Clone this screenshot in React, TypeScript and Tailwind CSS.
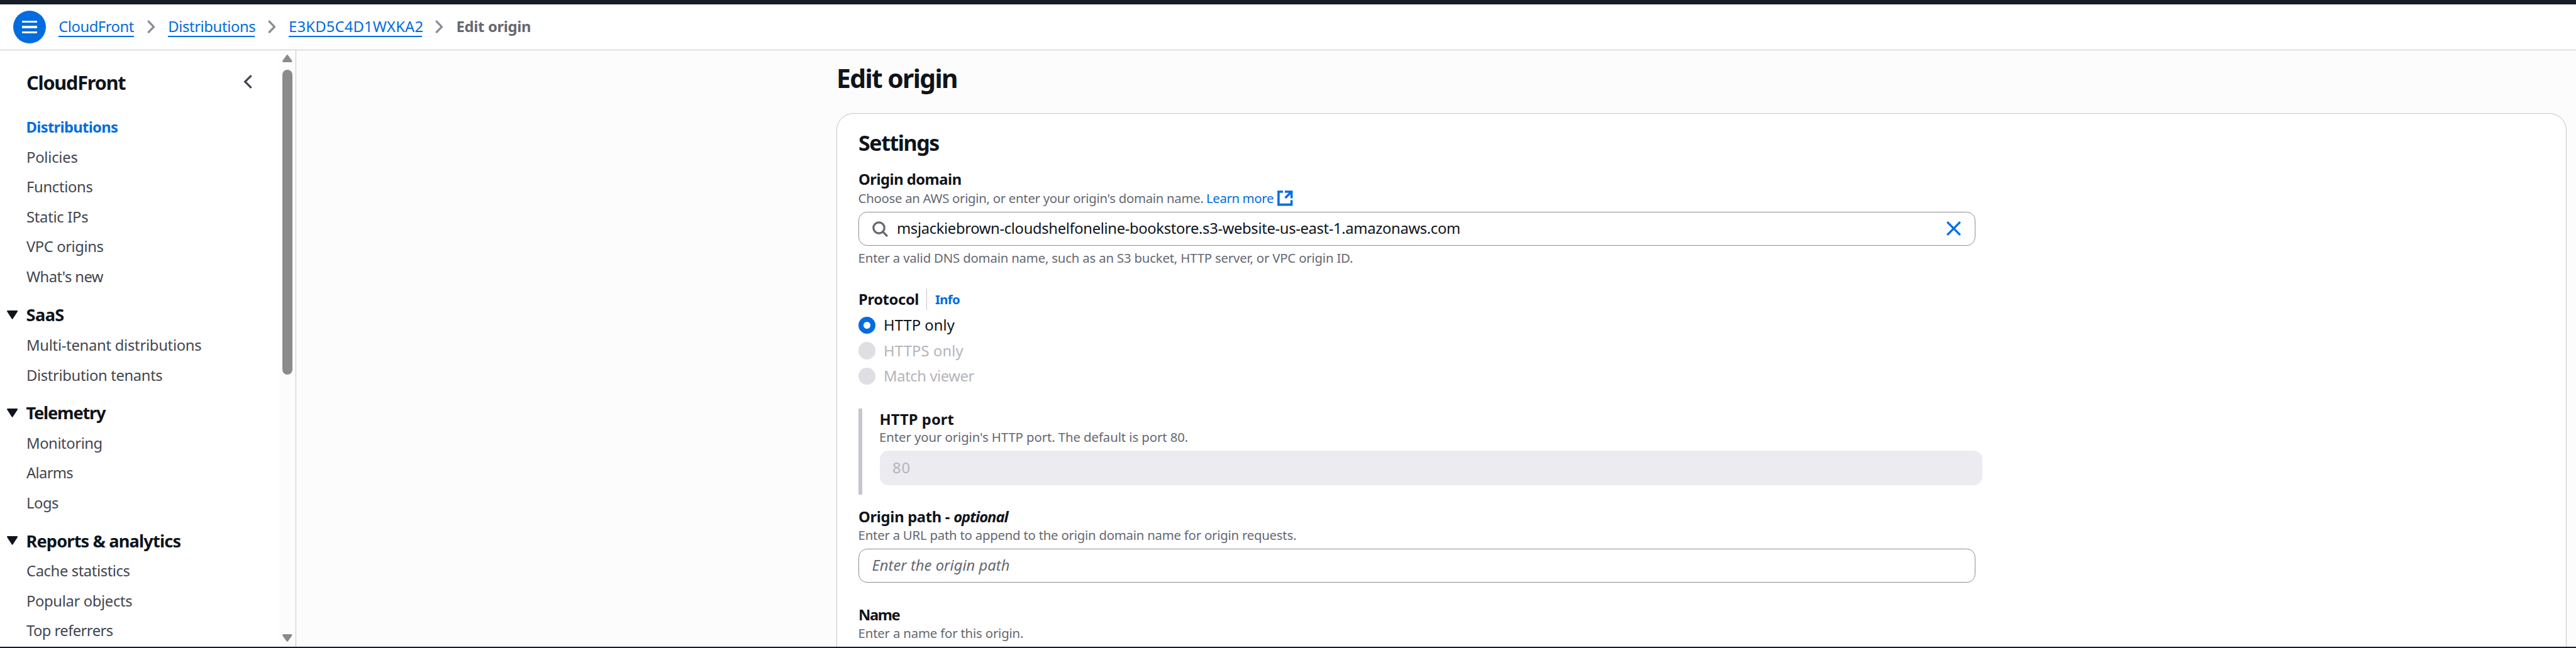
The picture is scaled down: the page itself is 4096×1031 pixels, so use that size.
import React from "react";

type Item = { label: string; tracking: string };
type Section = { title: string; tracking: string; spacing: string; items: Item[] };

const topLinks: Item[] = [
  { label: "Policies", tracking: "tracking-[-0.23px]" },
  { label: "Functions", tracking: "tracking-[-0.32px]" },
  { label: "Static IPs", tracking: "tracking-[-0.29px]" },
  { label: "VPC origins", tracking: "tracking-[-0.43px]" },
  { label: "What's new", tracking: "tracking-[-0.6px]" },
];

const sections: Section[] = [
  {
    title: "SaaS",
    tracking: "tracking-[-0.56px]",
    spacing: "pt-[13px] mb-[1.2px]",
    items: [
      { label: "Multi-tenant distributions", tracking: "tracking-[-0.28px]" },
      { label: "Distribution tenants", tracking: "tracking-[-0.36px]" },
    ],
  },
  {
    title: "Telemetry",
    tracking: "tracking-[-1.19px]",
    spacing: "pt-[12px] mb-[0.7px]",
    items: [
      { label: "Monitoring", tracking: "tracking-[-0.43px]" },
      { label: "Alarms", tracking: "tracking-[-0.68px]" },
      { label: "Logs", tracking: "tracking-[-0.47px]" },
    ],
  },
  {
    title: "Reports & analytics",
    tracking: "tracking-[-0.85px]",
    spacing: "pt-[12.4px] mb-[1.2px]",
    items: [
      { label: "Cache statistics", tracking: "tracking-[-0.41px]" },
      { label: "Popular objects", tracking: "tracking-[-0.36px]" },
      { label: "Top referrers", tracking: "tracking-[-0.57px]" },
    ],
  },
];

function Separator() {
  return (
    <svg className="mx-[20.8px] h-[21.4px] w-[12.6px] shrink-0" viewBox="0 0 12.6 21.4" fill="none" stroke="#8c8c94" strokeWidth="3.3">
      <path d="M1.3 1.2 L10.4 10.7 L1.3 20.2" />
    </svg>
  );
}

function Crumb({ label, className }: { label: string; className: string }) {
  return (
    <a className={`shrink-0 whitespace-nowrap border-b-2 border-[#006ce0] leading-[30px] text-[#006ce0] ${className}`}>{label}</a>
  );
}

function Header() {
  return (
    <header className="flex h-[73px] shrink-0 items-center border-b border-[#c6c6cd] bg-white pl-[21px] text-[23.8px]">
      <button className="mr-[20.4px] flex size-[51.8px] shrink-0 flex-col items-center justify-center gap-[5.3px] rounded-full bg-[#006ce0]">
        <span className="h-[3.2px] w-[24.6px] bg-white" />
        <span className="h-[3.2px] w-[24.6px] bg-white" />
        <span className="h-[3.2px] w-[24.6px] bg-white" />
      </button>
      <Crumb label="CloudFront" className="w-[119.8px] tracking-[-0.46px]" />
      <Separator />
      <Crumb label="Distributions" className="w-[137.7px] tracking-[-0.38px]" />
      <Separator />
      <Crumb label="E3KD5C4D1WXKA2" className="w-[212.3px] tracking-[0.17px]" />
      <Separator />
      <span className="border-b-2 border-transparent font-bold leading-[30px] tracking-[-0.33px] text-[#656871]">Edit origin</span>
    </header>
  );
}

function ScrollArrow({ down = false }: { down?: boolean }) {
  return (
    <svg className="h-[12px] w-[15.6px] shrink-0" viewBox="0 0 15.6 12" fill="#8b8b8b" stroke="#8b8b8b" strokeWidth="3" strokeLinejoin="round">
      <path d={down ? "M1.6 1.6 H14 L7.8 10.3 Z" : "M1.6 10.4 H14 L7.8 1.7 Z"} />
    </svg>
  );
}

function Sidebar() {
  return (
    <aside className="flex w-[471px] shrink-0 overflow-hidden border-r border-[#c6c6cd] bg-white">
      <nav className="min-w-0 flex-1 text-[23.8px] leading-[47.57px] text-[#424650]">
        <div className="mb-[28px] mt-[31px] flex h-[40px] items-center justify-between pl-[42px] pr-[43px]">
          <h2 className="text-[30.6px] font-bold leading-[40px] tracking-[-1.18px] text-[#0f141a]">CloudFront</h2>
          <svg className="mb-[2px] h-[22px] w-[14px]" viewBox="0 0 14 22" fill="none" stroke="#424650" strokeWidth="3.3">
            <path d="M12.6 1.2 L2.7 11 L12.6 20.8" />
          </svg>
        </div>
        <div className="pl-[41.5px] font-bold tracking-[-0.69px] text-[#006ce0]">Distributions</div>
        {topLinks.map((l) => (
          <div key={l.label} className={`pl-[42px] ${l.tracking}`}>{l.label}</div>
        ))}
        {sections.map((s) => (
          <div key={s.title}>
            <div className={`flex items-center pl-[11px] ${s.spacing}`}>
              <svg className="mb-[1px] mr-[13.3px] h-[14px] w-[17.2px]" viewBox="0 0 17.2 14" fill="#0f141a" stroke="#0f141a" strokeWidth="2" strokeLinejoin="round">
                <path d="M1.1 1.1 H16.1 L8.6 12.6 Z" />
              </svg>
              <h3 className={`text-[27.2px] font-bold text-[#0f141a] ${s.tracking}`}>{s.title}</h3>
            </div>
            {s.items.map((l) => (
              <div key={l.label} className={`pl-[42px] ${l.tracking}`}>{l.label}</div>
            ))}
          </div>
        ))}
      </nav>
      <div className="flex w-[26px] flex-col items-center bg-[#fcfcfc] pb-[8px] pt-[7px]">
        <ScrollArrow />
        <div className="mt-[12px] h-[485px] w-[15.6px] rounded-full bg-[#8b8b8b]" />
        <div className="flex-1" />
        <ScrollArrow down />
      </div>
    </aside>
  );
}

function Label({ children, className }: { children: React.ReactNode; className: string }) {
  return <div className={`whitespace-nowrap text-[23.8px] font-bold leading-[34px] text-[#0f141a] ${className}`}>{children}</div>;
}

function Hint({ children, className }: { children: React.ReactNode; className: string }) {
  return <div className={`-ml-[0.4px] whitespace-nowrap text-[20.4px] leading-[27.2px] text-[#656871] ${className}`}>{children}</div>;
}

function Radio({ label, className, checked = false }: { label: string; className: string; checked?: boolean }) {
  return (
    <div className={`flex h-[40.8px] items-center gap-[12.9px] text-[23.8px] leading-[34px] ${checked ? "text-[#0f141a]" : "text-[#b4b4bb]"}`}>
      <span className={`flex size-[27.2px] items-center justify-center rounded-full ${checked ? "bg-[#006ce0]" : "bg-[#dedee3]"}`}>
        {checked && <span className="size-[11.4px] rounded-full bg-white" />}
      </span>
      <span className={`pb-px ${className}`}>{label}</span>
    </div>
  );
}

function SettingsCard() {
  return (
    <section className="flex-1 overflow-hidden rounded-t-[27px] border border-b-0 border-[#c6c6cd] bg-white pl-[34px] pt-[25.6px]">
      <h2 className="mb-[21.4px] text-[34px] font-bold leading-[40px] tracking-[-1.43px] text-[#0f141a]">Settings</h2>

      <Label className="tracking-[-0.52px]">Origin domain</Label>
      <Hint className="flex items-center">
        <span className="tracking-[-0.31px]">Choose an AWS origin, or enter your origin's domain name.</span>
        <a className="ml-[4.4px] tracking-[-0.38px] text-[#006ce0]">Learn more</a>
        <svg className="ml-[6.4px] size-[24.6px]" viewBox="0 0 76 76" fill="none" stroke="#006ce0" strokeWidth="11">
          <path d="M28 6 H6 V70 H70 V48 M37 6 H70 V39 M68 8 L39 37" />
        </svg>
      </Hint>
      <div className="mt-[7.7px] flex h-[54.3px] w-[1775.7px] items-center rounded-[13.6px] border border-[#8c8c94] pl-[20.6px] pr-[21.6px]">
        <svg className="mr-[14.4px] size-[25px]" viewBox="0 0 76 76" fill="none" stroke="#656871" strokeWidth="10">
          <circle cx="32" cy="32" r="26.5" />
          <path d="M50 50 L73 73" />
        </svg>
        <span className="flex-1 pb-[2.4px] text-[23.8px] leading-[34px] tracking-[-0.36px] text-[#0f141a]">
          msjackiebrown-cloudshelfoneline-bookstore.s3-website-us-east-1.amazonaws.com
        </span>
        <svg className="mb-[1px] size-[23px]" viewBox="0 0 23 23" fill="none" stroke="#006ce0" strokeWidth="3.3">
          <path d="M1.2 1.2 L21.8 21.8 M21.8 1.2 L1.2 21.8" />
        </svg>
      </div>
      <Hint className="mt-[5.6px] tracking-[-0.21px]">
        Enter a valid DNS domain name, such as an S3 bucket, HTTP server, or VPC origin ID.
      </Hint>

      <Label className="mt-[34.2px] flex items-center">
        <span className="w-[109px] border-r border-[#c6c6cd] tracking-[-0.4px]">Protocol</span>
        <a className="pl-[13px] pt-[1px] text-[20.4px] tracking-[-0.7px] text-[#006ce0]">Info</a>
      </Label>
      <div className="mt-[3.7px]">
        <Radio checked label="HTTP only" className="tracking-[0.02px]" />
        <Radio label="HTTPS only" className="tracking-[0.12px]" />
        <Radio label="Match viewer" className="tracking-[-0.42px]" />
      </div>

      <div className="mt-[31.1px] h-[137.5px] border-l-[6.8px] border-[#c6c6cd] pl-[27.5px]">
        <Label className="-mt-[0.6px] tracking-[0.05px]">HTTP port</Label>
        <Hint className="-mt-[1.4px] tracking-[-0.11px]">Enter your origin's HTTP port. The default is port 80.</Hint>
        <div className="mt-[7.8px] flex h-[54.4px] w-[1753px] items-center rounded-[13.6px] bg-[#ebebf0] pb-[2px] pl-[20.6px] text-[23.8px] leading-[34px] tracking-[0.8px] text-[#b4b4bb]">
          80
        </div>
      </div>

      <Label className="mt-[17.4px] flex gap-[6px]">
        <span className="tracking-[-0.32px]">Origin path -</span>
        <i className="tracking-[-0.98px]">optional</i>
      </Label>
      <Hint className="-mt-[0.5px] tracking-[-0.25px]">Enter a URL path to append to the origin domain name for origin requests.</Hint>
      <div className="mt-[7.6px] flex h-[54.4px] w-[1775.7px] items-center rounded-[13.6px] border border-[#8c8c94] pb-[2px] pl-[20.5px] text-[23.8px] italic leading-[34px] text-[#656871]">
        Enter the origin path
      </div>

      <Label className="mt-[33.4px] tracking-[-1.4px]">Name</Label>
      <Hint className="-mt-[0.4px] tracking-[-0.2px]">Enter a name for this origin.</Hint>
    </section>
  );
}

export default function App() {
  return (
    <div className="flex h-[1031px] w-[4096px] flex-col overflow-hidden bg-white font-['Noto_Sans',sans-serif]">
      <div className="h-[7px] shrink-0 bg-[#161d26]" />
      <Header />
      <div className="flex min-h-0 flex-1">
        <Sidebar />
        <main className="flex min-w-0 flex-1 flex-col bg-[#fcfcfc] pl-[859px] pr-[15px] pt-[20px]">
          <h1 className="mb-[32px] shrink-0 text-[40.8px] font-bold leading-[48px] tracking-[-1.6px] text-[#0f141a]">Edit origin</h1>
          <SettingsCard />
        </main>
      </div>
      <div className="h-[2px] shrink-0 bg-[#161d26]" />
    </div>
  );
}
